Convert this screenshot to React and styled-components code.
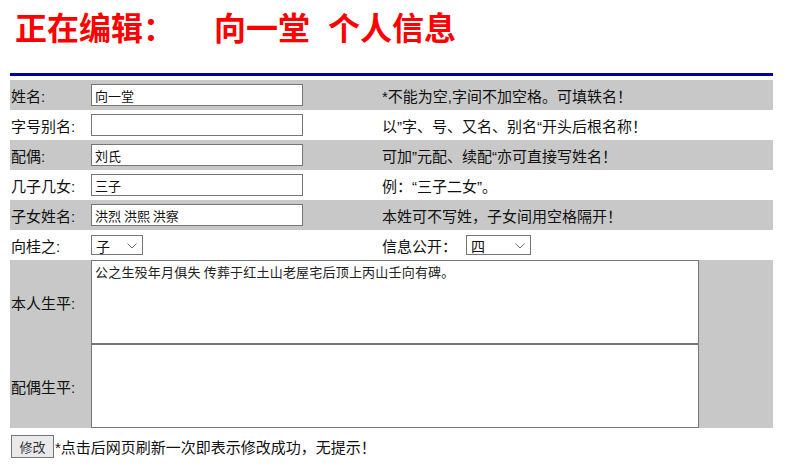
import React from "react";
import styled, { createGlobalStyle } from "styled-components";

const GlobalStyle = createGlobalStyle`
  html, body {
    margin: 0;
    padding: 0;
    background: #fff;
  }
  body {
    font-family: "Liberation Sans", "Noto Sans CJK SC", sans-serif;
    color: #111;
  }
`;

const rows = [
    { label: "姓名:", value: "向一堂", note: "*不能为空,字间不加空格。可填轶名！", shaded: true },
    { label: "字号别名:", value: "", note: "以”字、号、又名、别名“开头后根名称！", shaded: false },
    { label: "配偶:", value: "刘氏", note: "可加”元配、续配“亦可直接写姓名！", shaded: true },
    { label: "几子几女:", value: "三子", note: "例：“三子二女”。", shaded: false },
    { label: "子女姓名:", value: "洪烈 洪熙 洪察", note: "本姓可不写姓，子女间用空格隔开！", shaded: true },
];

const Dropdown = ({ width, gap, value, options }) => (
    <SelectWrap $width={width} $gap={gap}>
        <Select defaultValue={value}>
            {options.map((o) => (
                <option key={o}>{o}</option>
            ))}
        </Select>
        <Chevron viewBox="0 0 10 6" width="10" height="6">
            <path d="M0.5 0.5 L5 5 L9.5 0.5" fill="none" stroke="#6f6f6f" strokeWidth="1" />
        </Chevron>
    </SelectWrap>
);

const App = () => {
    return (
        <Page>
            <GlobalStyle />
            <Title>
                正在编辑：<Name>向一堂</Name>
                <Gap>个人信息</Gap>
            </Title>
            <Rule />
            <Form onSubmit={(e) => e.preventDefault()}>
                {rows.map((row) => (
                    <Row key={row.label} $shaded={row.shaded}>
                        <Label>{row.label}</Label>
                        <Cell>
                            <TextInput type="text" defaultValue={row.value} />
                        </Cell>
                        <Note>{row.note}</Note>
                    </Row>
                ))}
                <Row $shaded={false}>
                    <Label>向桂之:</Label>
                    <Cell>
                        <Dropdown width={52} value="子" options={["子", "女", "媳"]} />
                    </Cell>
                    <Note>
                        信息公开：
                        <Dropdown width={65} gap={9} value="四" options={["一", "二", "三", "四"]} />
                    </Note>
                </Row>
                <Bio>
                    <BioLabel>本人生平:</BioLabel>
                    <Area defaultValue="公之生殁年月俱失 传葬于红土山老屋宅后顶上丙山壬向有碑。" />
                    <BioLabel>配偶生平:</BioLabel>
                    <Area defaultValue="" />
                </Bio>
                <Footer>
                    <Button type="submit">修改</Button>
                    <Hint>*点击后网页刷新一次即表示修改成功，无提示！</Hint>
                </Footer>
            </Form>
        </Page>
    );
};

export default App;

const Page = styled.div`
    padding: 0 13px 0 10px;
    width: 763px;
`;

const Title = styled.div`
    padding: 6px 0 0 5px;
    height: 40px;
    line-height: 40px;
    font-size: 32px;
    font-weight: bold;
    color: #ff0000;
    font-family: "Noto Sans CJK SC", sans-serif;
    white-space: nowrap;
`;

const Name = styled.span`
    margin-left: 39px;
`;

const Gap = styled.span`
    margin-left: 18px;
`;

const Rule = styled.div`
    margin-top: 27px;
    height: 3px;
    background: #000099;
`;

const Form = styled.form`
    margin-top: 4px;
    display: flex;
    flex-direction: column;
`;

const Row = styled.div`
    display: grid;
    grid-template-columns: 81px 291px 1fr;
    align-items: center;
    height: 30px;
    background: ${(p) => (p.$shaded ? "#c8c8c8" : "#fff")};
    font-size: 15px;
`;

const Label = styled.div`
    padding-left: 1px;
    white-space: nowrap;
`;

const Cell = styled.div`
    display: flex;
    align-items: center;
`;

const Note = styled.div`
    display: flex;
    align-items: center;
    white-space: nowrap;
`;

const TextInput = styled.input`
    box-sizing: border-box;
    width: 212px;
    height: 22px;
    border: 1px solid #767676;
    padding: 0 3px;
    font-size: 13px;
    font-family: "Noto Sans CJK SC", sans-serif;
    color: #111;
    outline: none;
`;

const SelectWrap = styled.div`
    position: relative;
    width: ${(p) => p.$width}px;
    height: 20px;
    margin-left: ${(p) => p.$gap || 0}px;
`;

const Select = styled.select`
    appearance: none;
    box-sizing: border-box;
    width: 100%;
    height: 100%;
    border: 1px solid #767676;
    border-radius: 0;
    background: #fff;
    padding: 0 0 0 4px;
    margin: 0;
    font-size: 14px;
    font-family: "Noto Sans CJK SC", sans-serif;
    color: #111;
    outline: none;
`;

const Chevron = styled.svg`
    position: absolute;
    right: 6px;
    top: 8px;
    pointer-events: none;
`;

const Bio = styled.div`
    display: grid;
    grid-template-columns: 81px 1fr;
    grid-template-rows: 84px 84px;
    align-items: center;
    background: #c8c8c8;
    font-size: 15px;
`;

const BioLabel = styled.div`
    padding-left: 1px;
`;

const Area = styled.textarea`
    box-sizing: border-box;
    width: 608px;
    height: 84px;
    margin: 0;
    border: 1px solid #767676;
    padding: 2px 3px;
    resize: none;
    font-size: 13px;
    line-height: 17px;
    letter-spacing: 0.2px;
    font-family: "Noto Sans CJK SC", sans-serif;
    color: #222;
    display: block;
    align-self: stretch;
`;

const Footer = styled.div`
    display: flex;
    align-items: center;
    margin-top: 7px;
    padding-left: 1px;
`;

const Button = styled.button`
    box-sizing: border-box;
    width: 43px;
    height: 23px;
    padding: 0;
    border: 1px solid #767676;
    background: #e9e9ed;
    font-size: 13px;
    font-family: "Noto Sans CJK SC", sans-serif;
    color: #333;
`;

const Hint = styled.span`
    font-size: 15px;
    margin-left: 1px;
`;
